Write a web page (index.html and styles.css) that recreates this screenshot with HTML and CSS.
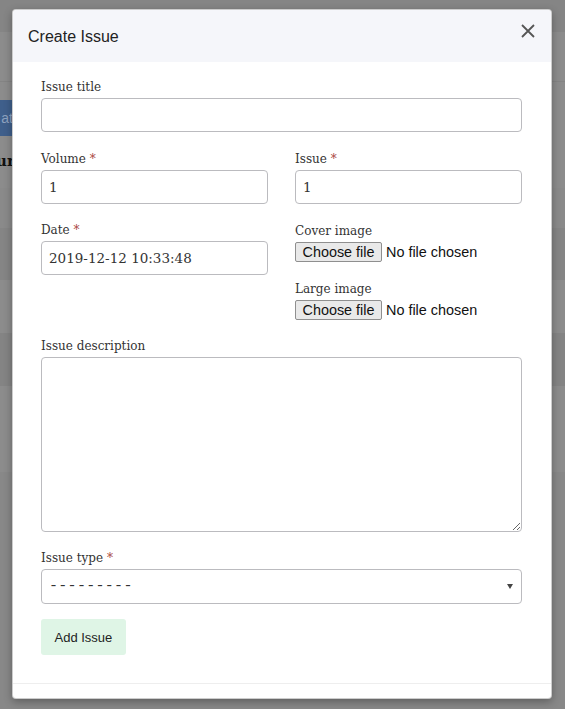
FILE: index.html
```html
<!DOCTYPE html>
<html lang="en">
<head>
<meta charset="utf-8">
<title>Create Issue</title>
<link rel="stylesheet" href="styles.css">
</head>
<body>
<div class="page">
  <div class="band b1"></div>
  <div class="band b2"></div>
  <div class="band b3"><span class="blue-btn">at</span></div>
  <div class="band b4"></div>
  <div class="band b5"><span class="heading">ur</span></div>
  <div class="band b6"></div>
  <div class="band b7"></div>
  <div class="band b8"></div>
  <div class="band b9"></div>
  <div class="band b10"></div>
</div>

<div class="modal">
  <div class="modal-header">
    <h4 class="modal-title">Create Issue</h4>
    <button class="close" type="button" aria-label="Close">
      <svg width="14" height="14" viewBox="0 0 14 14"><path d="M1 1 L13 13 M13 1 L1 13" stroke="#555" stroke-width="1.8" fill="none"/></svg>
    </button>
  </div>
  <div class="modal-body">
    <div class="group g-title">
      <label class="lbl">Issue title</label>
      <input class="field" type="text">
    </div>
    <div class="cols">
      <div class="col">
        <div class="group">
          <label class="lbl">Volume <span class="req">*</span></label>
          <input class="field" type="text" value="1">
        </div>
        <div class="group">
          <label class="lbl">Date <span class="req">*</span></label>
          <input class="field" type="text" value="2019-12-12 10:33:48">
        </div>
      </div>
      <div class="col">
        <div class="group g-issue">
          <label class="lbl">Issue <span class="req">*</span></label>
          <input class="field" type="text" value="1">
        </div>
        <div class="group file-group">
          <label class="lbl">Cover image</label>
          <div class="file"><span class="file-btn">Choose file</span><span class="file-name">No file chosen</span></div>
        </div>
        <div class="group file-group last-file">
          <label class="lbl">Large image</label>
          <div class="file"><span class="file-btn">Choose file</span><span class="file-name">No file chosen</span></div>
        </div>
      </div>
    </div>
    <div class="group">
      <label class="lbl">Issue description</label>
      <textarea class="field area"></textarea>
    </div>
    <div class="group last">
      <label class="lbl">Issue type <span class="req">*</span></label>
      <div class="select-wrap">
        <select class="field select"><option>---------</option></select>
      </div>
    </div>
    <button class="btn-add" type="button">Add Issue</button>
  </div>
  <div class="modal-footer"></div>
</div>
</body>
</html>
```

FILE: styles.css
```css
html, body {
  margin: 0;
  padding: 0;
}
body {
  background: #888888;
  width: 565px;
  height: 709px;
  overflow: hidden;
  position: relative;
}
.page {
  display: flex;
  flex-direction: column;
}
.band { position: relative; }
.b1 { height: 32px; background: #858585; }
.b2 { height: 50px; background: #8c8c8c; border-bottom: 1px solid #848484; box-sizing: border-box; }
.b3 { height: 18px; background: #8c8c8c; z-index: 2; }
.b4 { height: 36px; background: #8c8c8c; }
.b5 { height: 52px; background: #8c8c8c; z-index: 2; }
.b6 { height: 40px; background: #8a8a8a; }
.b7 { height: 52px; background: #858585; }
.b8 { height: 53px; background: #8c8c8c; }
.b9 { height: 53px; background: #848484; }
.b10 { height: 86px; background: #8c8c8c; }
.blue-btn {
  position: absolute;
  left: -10px;
  top: 18px;
  width: 23px;
  height: 36px;
  background: #3f5f8b;
  color: #8ea2bf;
  font: 14px "Liberation Sans", Arial, sans-serif;
  line-height: 36px;
  text-align: right;
  overflow: hidden;
  white-space: nowrap;
}
.heading {
  position: absolute;
  left: -4px;
  top: 16px;
  font: bold 15px "DejaVu Serif", serif;
  color: #111;
}

.modal {
  position: absolute;
  z-index: 5;
  left: 12px;
  top: 9px;
  width: 540px;
  box-sizing: border-box;
  background: #fff;
  border: 1px solid rgba(0,0,0,0.2);
  border-radius: 4px;
  box-shadow: 0 3px 9px rgba(0,0,0,0.3);
}
.modal-header {
  height: 52px;
  background: #f5f6fa;
  border-radius: 4px 4px 0 0;
  display: flex;
  align-items: center;
  justify-content: space-between;
  padding: 0 16px 0 15px;
}
.modal-title {
  margin: 0;
  font: 16px "Liberation Sans", Arial, sans-serif;
  color: #222;
  padding-top: 2px;
}
.close {
  background: none;
  border: 0;
  padding: 0;
  width: 14px;
  height: 14px;
  display: flex;
  margin-top: -10px;
}
.modal-body {
  padding: 16px 29px 28px 28px;
}
.group {
  display: flex;
  flex-direction: column;
  margin-bottom: 17px;
}
.g-title, .g-issue { margin-bottom: 18px; }
.group.last { margin-bottom: 15px; }
.lbl {
  font: 12px "DejaVu Serif", serif;
  line-height: 18px;
  margin-bottom: 2px;
  color: #333;
}
.req { color: #a94442; }
.field {
  box-sizing: border-box;
  height: 34px;
  border: 1px solid #bbbbbf;
  border-radius: 4px;
  padding: 0 7px;
  font: 13.5px "DejaVu Serif", serif;
  color: #333;
  background: #fff;
  width: 100%;
  margin: 0;
}
.cols {
  display: grid;
  grid-template-columns: minmax(0, 1fr) minmax(0, 1fr);
  column-gap: 27px;
}
.file-group { margin-bottom: 18px; }
.file-group.last-file { margin-bottom: 17px; }
.file {
  display: flex;
  align-items: center;
  height: 20px;
  font: 14.4px "Liberation Sans", Arial, sans-serif;
  color: #111;
}
.file-btn {
  box-sizing: border-box;
  height: 20px;
  line-height: 18px;
  padding: 0 6.5px;
  background: #e9e9e9;
  border: 1px solid #8f8f8f;
  border-radius: 2px;
  color: #111;
}
.file-name { margin-left: 4px; }
.area {
  height: 175px;
  resize: vertical;
  display: block;
}
.select-wrap { position: relative; }
.select-wrap::after {
  content: "";
  position: absolute;
  right: 9px;
  top: 15px;
  border-left: 3.5px solid transparent;
  border-right: 3.5px solid transparent;
  border-top: 5px solid #444;
}
.select {
  -webkit-appearance: none;
  appearance: none;
  height: 35px;
  font: 15px "Liberation Mono", monospace;
  letter-spacing: 0.3px;
  color: #333;
  padding-left: 7px;
  display: block;
}
.btn-add {
  height: 36px;
  padding: 0 13.5px;
  background: #dff5e6;
  border: 0;
  border-radius: 3px;
  font: 13px "Liberation Sans", Arial, sans-serif;
  color: #222;
}
.modal-footer {
  height: 14px;
  border-top: 1px solid #eeeeee;
}
```
